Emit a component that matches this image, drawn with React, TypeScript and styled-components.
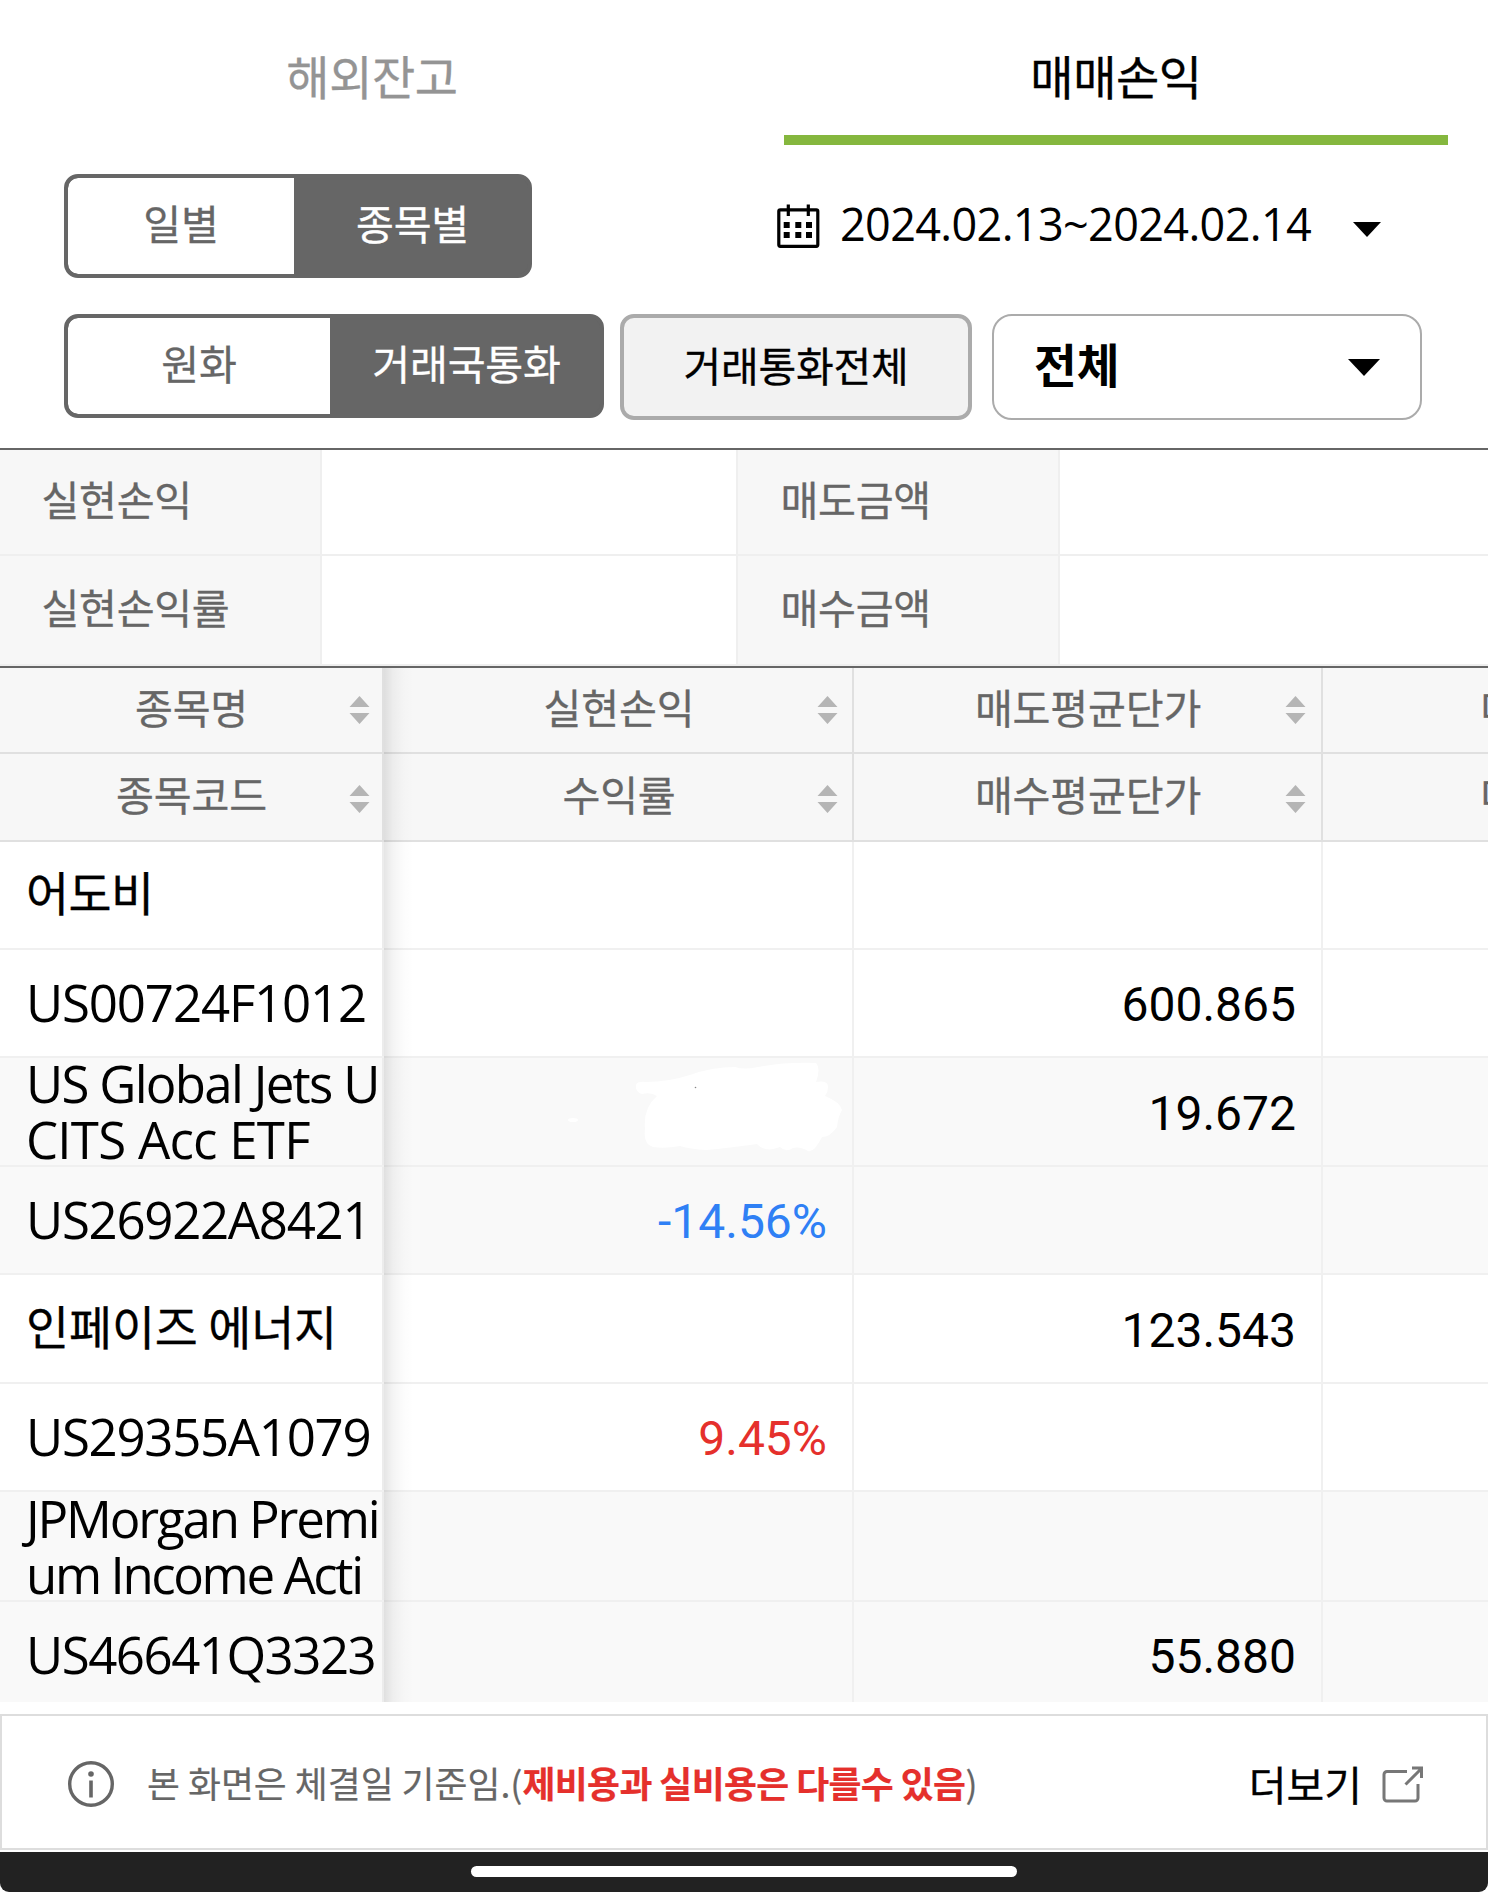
import React from 'react';
import styled, { createGlobalStyle, css } from 'styled-components';

const GlobalStyle = createGlobalStyle`
  *, *::before, *::after { box-sizing: border-box; }
  body { margin: 0; background: #fff; }
  svg { display: block; flex: none; }
`;

const KR = `'Noto Sans CJK KR', sans-serif`;
const MIXED = `'Open Sans', 'Noto Sans CJK KR', sans-serif`;

const Screen = styled.div`
  width: 1488px;
  height: 1892px;
  display: flex;
  flex-direction: column;
  overflow: hidden;
  background: #fff;
  color: #000;
  font-family: ${KR};
  line-height: 1;
  white-space: nowrap;
`;

/* Thickens the thin Hangul strokes a little. */
const hangul = css`
  -webkit-text-stroke: 0.3px currentColor;
`;

/* ---------- tabs ---------- */
const Tabs = styled.nav`
  display: flex;
  height: 145px;
  flex: none;
`;
const Tab = styled.div<{ $active?: boolean }>`
  flex: 1;
  margin: 0 40px;
  padding-top: 13px;
  display: flex;
  align-items: center;
  justify-content: center;
  font-size: 47px;
  letter-spacing: -0.4px;
  ${hangul}
  color: ${p => (p.$active ? '#000' : '#949494')};
  border-bottom: 10px solid ${p => (p.$active ? '#85b73e' : 'transparent')};
`;

/* ---------- filters ---------- */
const Filters = styled.section`
  flex: none;
  height: 303px;
  padding: 29px 66px 0 64px;
  display: flex;
  flex-direction: column;
  gap: 36px;
`;
const FilterRow = styled.div`
  display: flex;
  align-items: flex-start;
`;
const Segmented = styled.div<{ $w: number }>`
  width: ${p => p.$w}px;
  height: 104px;
  display: flex;
  border: 4px solid #666;
  border-radius: 14px;
  background: #666;
  overflow: hidden;
`;
const Segment = styled.div<{ $w?: number; $on?: boolean }>`
  ${p => (p.$w ? css`width: ${p.$w}px;` : css`flex: 1;`)}
  display: flex;
  align-items: center;
  justify-content: center;
  font-size: 41.2px;
  letter-spacing: -0.2px;
  ${hangul}
  border-radius: ${p => (p.$on ? '0' : '10px 0 0 10px')};
  background: ${p => (p.$on ? '#666' : '#fff')};
  color: ${p => (p.$on ? '#fff' : '#666')};
  padding: 0 0 7px ${p => (p.$on ? 3 : 0)}px;
`;
const DateRange = styled.div`
  margin-left: 245px;
  height: 104px;
  display: flex;
  align-items: center;
  font-family: ${MIXED};
  font-size: 45px;
  letter-spacing: -0.65px;
`;
const DateText = styled.span`
  width: 474px;
  margin: 0 0 6px 19px;
`;
const ScopeButton = styled.div`
  margin-left: 16px;
  width: 352px;
  height: 106px;
  display: flex;
  align-items: center;
  justify-content: center;
  padding-bottom: 6px;
  border: 4px solid #ababab;
  border-radius: 14px;
  background: #f2f2f2;
  font-size: 41px;
  letter-spacing: -0.2px;
  ${hangul}
`;
const Select = styled.div`
  margin-left: 20px;
  width: 430px;
  height: 106px;
  display: flex;
  align-items: center;
  justify-content: space-between;
  padding: 0 40px 8px 40px;
  border: 2px solid #ababab;
  border-radius: 20px;
  font-size: 46.5px;
  font-weight: 700;
`;
const Caret = styled.i<{ $w: number; $h: number; $top?: number; $left?: number }>`
  width: 0;
  height: 0;
  margin-top: ${p => p.$top ?? 0}px;
  margin-left: ${p => p.$left ?? 0}px;
  border-left: ${p => p.$w / 2}px solid transparent;
  border-right: ${p => p.$w / 2}px solid transparent;
  border-top: ${p => p.$h}px solid #000;
`;

/* ---------- summary ---------- */
const Summary = styled.section`
  flex: none;
  height: 220px;
  display: grid;
  grid-template-columns: 322px 414px 324px 1fr;
  grid-template-rows: 106px 110px;
  border-top: 2px solid #666;
  border-bottom: 2px solid #666;
`;
const SummaryLabel = styled.div<{ $edge?: boolean }>`
  padding: 0 0 7px ${p => (p.$edge ? 41.5 : 42.5)}px;
  display: flex;
  align-items: center;
  background: #f7f7f7;
  color: #666;
  font-size: 41.2px;
  letter-spacing: -0.3px;
  ${hangul}
  border: 0 solid #efefef;
  border-width: 0 2px 2px ${p => (p.$edge ? 0 : 2)}px;
`;
const SummaryValue = styled.div`
  border-bottom: 2px solid #efefef;
`;

/* ---------- table ---------- */
const Table = styled.section`
  position: relative;
  flex: none;
  height: 1034px;
  width: 1790px;
  overflow: hidden;
`;
const PinnedShadow = styled.div`
  position: absolute;
  top: 0;
  bottom: 0;
  left: 384px;
  width: 30px;
  background: linear-gradient(to right, rgba(0, 0, 0, 0.1), rgba(0, 0, 0, 0.045) 30%, rgba(0, 0, 0, 0.012) 65%, transparent);
`;
const Row = styled.div<{ $h: number; $bg: string; $line: string }>`
  display: grid;
  grid-template-columns: 384px 470px 469px 467px;
  grid-template-rows: 100%;
  height: ${p => p.$h}px;
  background: ${p => p.$bg};
  border-bottom: 2px solid ${p => p.$line};
`;
const HeadCell = styled.div<{ $drop: number }>`
  display: grid;
  grid-template-columns: 1fr 21px;
  align-items: center;
  padding-right: 15px;
  border-right: 2px solid #e0e0e0;
  color: #666;

  svg { margin-top: ${p => p.$drop}px; }

  &:first-child { padding-right: 12px; }
  &:nth-child(2) { padding-right: 14px; }
`;
const HeadText = styled.span`
  padding: 0 0 6px 37px;
  text-align: center;
  font-size: 41.2px;
  letter-spacing: -0.2px;
  ${hangul}

  ${HeadCell}:first-child & { padding-left: 34px; }
`;
const NameCell = styled.div<{ $latin?: boolean; $lift: number }>`
  display: flex;
  flex-direction: column;
  justify-content: center;
  padding: 0 0 ${p => p.$lift}px 26px;
  border-right: 2px solid #ececec;
  font-family: ${p => (p.$latin ? MIXED : KR)};
  font-size: ${p => (p.$latin ? 51 : 46.8)}px;
  line-height: 56px;
  white-space: pre;
  ${p => !p.$latin && hangul}
`;
const NameLine = styled.span<{ $track: number }>`
  flex: none;
  letter-spacing: ${p => p.$track}px;
`;
const ValueCell = styled.div<{ $color?: string; $drop?: number }>`
  position: relative;
  display: flex;
  align-items: center;
  justify-content: flex-end;
  padding: ${p => p.$drop ?? 4}px 25px 0 0;
  border-right: 2px solid #f0f0f0;
  color: ${p => p.$color ?? '#000'};
  font-family: Roboto, sans-serif;
  font-size: 48px;
`;
const Scribble = styled.svg`
  position: absolute;
  left: 180px;
  top: 0;
`;

/* ---------- footer ---------- */
const Notice = styled.footer`
  flex: none;
  margin-top: 12px;
  height: 136px;
  padding: 3px 62px 0 65px;
  display: flex;
  align-items: center;
  border: 2px solid #ddd;
  color: #666;
  font-size: 35.8px;
  letter-spacing: 0;
`;
const NoticeText = styled.p`
  flex: 1;
  margin: 0 0 1px 32px;
  -webkit-text-stroke: 0.2px currentColor;
`;
const Warn = styled.strong`
  color: #e5302c;
  font-weight: 700;
  letter-spacing: -0.6px;
`;
const More = styled.span`
  margin: 0 20px 0 0;
  color: #000;
  font-size: 41px;
  ${hangul}
`;
const HomeBar = styled.div`
  flex: none;
  margin-top: 2px;
  height: 40px;
  padding-top: 14px;
  background: #222;
  border-radius: 0 0 9px 9px;
  display: flex;
  justify-content: center;
`;
const HomePill = styled.div`
  width: 546px;
  height: 11px;
  border-radius: 6px;
  background: #fff;
`;

const CalendarIcon = () => (
  <svg width="44" height="46" viewBox="0 0 44 46" fill="none" stroke="#000">
    <rect x="1.8" y="6.800" width="39" height="36.500" rx="1.500" strokeWidth="3.2" />
    <path d="M11.300 1.500v11.500M31.300 1.500v11.500" strokeWidth="3.200" />
    <path d="M6.700 22h6M18.300 22h6M29 22h6M6.700 32h6M18.300 32h6M29 32h6" strokeWidth="6" />
  </svg>
);

const SortIcon = () => (
  <svg width="21" height="28" viewBox="0 0 21 28" fill="#b5b5b5">
    <path d="M10.5 0L20.5 11H.5zM10.5 28L20.5 17H.5z" />
  </svg>
);

const InfoIcon = () => (
  <svg width="48" height="48" viewBox="0 0 48 48" fill="none" stroke="#666">
    <circle cx="24" cy="24" r="21.3" strokeWidth="3.4" />
    <path d="M24 20.5v17" strokeWidth="3.6" />
    <circle cx="24" cy="14" r="2.8" fill="#666" stroke="none" />
  </svg>
);

const OpenIcon = () => (
  <svg width="42" height="38" viewBox="0 0 42 38" fill="none" stroke="#777" strokeWidth="3">
    <g transform="translate(0 1)">
      <path d="M25 5.5H5a3 3 0 0 0-3 3V32a3 3 0 0 0 3 3H33a3 3 0 0 0 3-3V18" />
      <path d="M23.500 18.500L39.500 2.500M30 2H39.500V12" />
    </g>
  </svg>
);

const headers = [
  ['종목명', '실현손익', '매도평균단가', '매도금액'],
  ['종목코드', '수익률', '매수평균단가', '매수금액'],
];

interface Holding {
  /* Each line of the name with its letter spacing. */
  name: [string, number][];
  latin?: boolean;
  rate?: string;
  color?: string;
  price?: string;
  h: number;
  lift?: number;
  drop?: number;
  alt?: boolean;
  masked?: boolean;
}

const rows: Holding[] = [
  { name: [['어도비', -0.5]], h: 108, lift: 9 },
  { name: [['US00724F1012', -1.15]], latin: true, price: '600.865', h: 108, lift: 3 },
  {
    name: [['US Global Jets U', -1.7], ['CITS Acc ETF', -0.75]],
    latin: true, price: '19.672', h: 109, lift: 1, drop: 5, alt: true, masked: true,
  },
  { name: [['US26922A8421', -1.3]], latin: true, rate: '-14.56%', color: '#2f80f5', h: 108, alt: true },
  { name: [['인페이즈 에너지', -0.1]], price: '123.543', h: 109, lift: 7 },
  { name: [['US29355A1079', -1.3]], latin: true, rate: '9.45%', color: '#e5302c', h: 108 },
  { name: [['JPMorgan Premi', -2.15], ['um Income Acti', -2.4]], latin: true, h: 110, lift: 1, alt: true },
  { name: [['US46641Q3323', -1.5]], latin: true, price: '55.880', h: 108, lift: 3, alt: true },
];

export default function App() {
  return (
    <>
      <GlobalStyle />
      <Screen>
        <Tabs>
          <Tab>해외잔고</Tab>
          <Tab $active>매매손익</Tab>
        </Tabs>

        <Filters>
          <FilterRow>
            <Segmented $w={468}>
              <Segment $w={226}>일별</Segment>
              <Segment $on>종목별</Segment>
            </Segmented>
            <DateRange>
              <CalendarIcon />
              <DateText>2024.02.13~2024.02.14</DateText>
              <Caret $w={28} $h={15} $top={6} $left={39} />
            </DateRange>
          </FilterRow>
          <FilterRow>
            <Segmented $w={540}>
              <Segment $w={262}>원화</Segment>
              <Segment $on>거래국통화</Segment>
            </Segmented>
            <ScopeButton>거래통화전체</ScopeButton>
            <Select>
              전체
              <Caret $w={33} $h={17} $top={8} />
            </Select>
          </FilterRow>
        </Filters>

        <Summary>
          <SummaryLabel $edge>실현손익</SummaryLabel>
          <SummaryValue />
          <SummaryLabel>매도금액</SummaryLabel>
          <SummaryValue />
          <SummaryLabel $edge>실현손익률</SummaryLabel>
          <SummaryValue />
          <SummaryLabel>매수금액</SummaryLabel>
          <SummaryValue />
        </Summary>

        <Table>
          {headers.map((cells, i) => (
            <Row key={i} $h={i === 0 ? 86 : 88} $bg="#f7f7f7" $line="#e0e0e0">
              {cells.map(text => (
                <HeadCell key={text} $drop={i === 0 ? 0 : 3}>
                  <HeadText>{text}</HeadText>
                  <SortIcon />
                </HeadCell>
              ))}
            </Row>
          ))}
          {rows.map(r => (
            <Row key={r.name[0][0]} $h={r.h} $bg={r.alt ? '#f9f9f9' : '#fff'} $line="#f0f0f0">
              <NameCell $latin={r.latin} $lift={r.lift ?? 2}>
                {r.name.map(([text, track]) => (
                  <NameLine key={text} $track={track}>{text}</NameLine>
                ))}
              </NameCell>
              <ValueCell $color={r.color}>
                {r.rate}
                {r.masked && (
                  <Scribble width="286" height="104" viewBox="564 1058 286 104" fill="#fff">
                    <path d="M636 1085Q637 1081 646 1082Q668 1082 690 1075Q712 1067 735 1067Q744 1070 758 1067Q785 1062 816 1063Q821 1068 816 1082Q828 1080 828 1087Q828 1092 825 1096Q840 1102 842 1110Q838 1117 837 1127Q830 1137 822 1137Q814 1153 808 1151Q800 1146 793 1148Q786 1153 780 1147Q765 1153 757 1144Q720 1149 706 1150Q690 1149 680 1146Q664 1149 653 1147Q643 1144 645 1129Q643 1108 657 1096Q651 1092 642 1094Q635 1092 636 1085Z" />
                    <ellipse cx="573" cy="1120" rx="5" ry="2" />
                    <circle cx="695.500" cy="1087.500" r=".8" fill="#888" />
                  </Scribble>
                )}
              </ValueCell>
              <ValueCell $drop={r.drop}>{r.price}</ValueCell>
              <ValueCell />
            </Row>
          ))}
          <PinnedShadow />
        </Table>

        <Notice>
          <InfoIcon />
          <NoticeText>
            본 화면은 체결일 기준임.(<Warn>제비용과 실비용은 다를수 있음</Warn>)
          </NoticeText>
          <More>더보기</More>
          <OpenIcon />
        </Notice>

        <HomeBar>
          <HomePill />
        </HomeBar>
      </Screen>
    </>
  );
}
